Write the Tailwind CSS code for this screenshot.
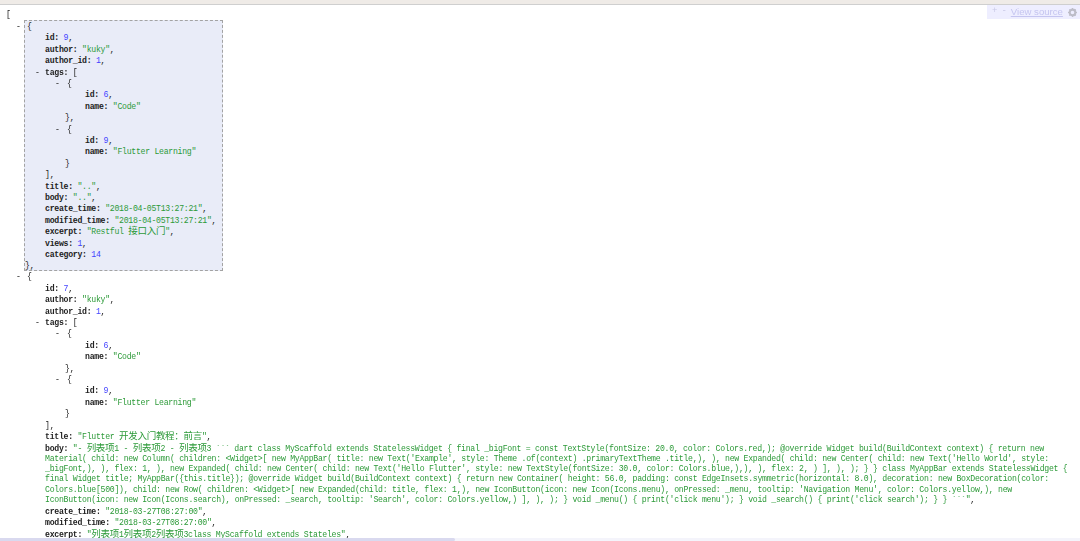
<!DOCTYPE html>
<html lang="zh">
<head>
    <meta charset="UTF-8">
    <title>JSON view</title>
    <script src="https://cdn.jsdelivr.net/npm/@tailwindcss/browser@4"></script>
</head>
<body class="bg-white">
<div class="relative h-[541px] w-[1080px] overflow-hidden font-['Liberation_Mono','Noto_Sans_CJK_SC',monospace] text-[8.2px] leading-[11.4px] tracking-[-0.287px] text-[#222] blur-[0.3px]">

    <!-- top strip -->
    <div class="h-[5px] border-b border-[#cfcfcf] bg-[#efebe7]"></div>

    <!-- view source bar -->
    <div class="absolute right-0 top-[5px] flex h-[14px] w-[93px] items-center gap-[4px] whitespace-nowrap bg-[#eeeeff] pl-[5px] text-[9px] tracking-normal text-[#c9c9e6]">
        <span>+</span><span>-</span>
        <a class="font-['Liberation_Sans',sans-serif] text-[9.6px] text-[#c5c5f0] underline">View source</a>
        <svg class="ml-[1px] shrink-0" width="9" height="9" viewBox="0 0 10 10"><circle cx="5" cy="5" r="3.2" fill="none" stroke="#bdbdc8" stroke-width="2.4"/><path d="M5 0v2M5 8v2M0 5h2M8 5h2M1.5 1.5l1.4 1.4M7.1 7.1l1.4 1.4M8.5 1.5L7.1 2.9M2.9 7.1L1.5 8.5" stroke="#bdbdc8" stroke-width="1.2"/></svg>
    </div>

    <!-- json -->
    <div class="pl-[6px] pt-[4px]">
        <div>[</div>

        <!-- selected item -->
        <div class="relative ml-[18px] h-[251px] w-[199px] border border-dashed border-[#a3a3a3] bg-[#e9ecf8] pl-[2px]">
            <span class="absolute left-[-9px] top-0">-</span>
            <div class="-mt-[0.5px]">{</div>
            <div class="pl-[18px]">
                <div class="font-bold">id: <span class="font-normal text-[#4343ff]">9</span><span class="font-normal">,</span></div>
                <div class="font-bold">author: <span class="font-normal text-[#2c9a38]">"kuky"</span><span class="font-normal">,</span></div>
                <div class="font-bold">author_id: <span class="font-normal text-[#4343ff]">1</span><span class="font-normal">,</span></div>
                <div class="relative font-bold"><span class="absolute left-[-10px] font-normal">-</span>tags: <span class="font-normal">[</span></div>
                <div class="relative pl-[22px]"><span class="absolute left-[10px]">-</span>{</div>
                <div class="pl-[40px] font-bold">id: <span class="font-normal text-[#4343ff]">6</span><span class="font-normal">,</span></div>
                <div class="pl-[40px] font-bold">name: <span class="font-normal text-[#2c9a38]">"Code"</span></div>
                <div class="pl-[20px]">},</div>
                <div class="relative pl-[22px]"><span class="absolute left-[10px]">-</span>{</div>
                <div class="pl-[40px] font-bold">id: <span class="font-normal text-[#4343ff]">9</span><span class="font-normal">,</span></div>
                <div class="pl-[40px] font-bold">name: <span class="font-normal text-[#2c9a38]">"Flutter Learning"</span></div>
                <div class="pl-[20px]">}</div>
                <div>],</div>
                <div class="font-bold">title: <span class="font-normal text-[#2c9a38]">".."</span><span class="font-normal">,</span></div>
                <div class="font-bold">body: <span class="font-normal text-[#2c9a38]">".."</span><span class="font-normal">,</span></div>
                <div class="font-bold">create_time: <span class="font-normal text-[#2c9a38]">"2018-04-05T13:27:21"</span><span class="font-normal">,</span></div>
                <div class="font-bold">modified_time: <span class="font-normal text-[#2c9a38]">"2018-04-05T13:27:21"</span><span class="font-normal">,</span></div>
                <div class="font-bold">excerpt: <span class="font-normal text-[#2c9a38]">"Restful <span class="text-[9.5px] leading-[9px]">接口入门</span>"</span><span class="font-normal">,</span></div>
                <div class="font-bold">views: <span class="font-normal text-[#4343ff]">1</span><span class="font-normal">,</span></div>
                <div class="font-bold">category: <span class="font-normal text-[#4343ff]">14</span></div>
            </div>
            <div class="ml-[-2px]">},</div>
        </div>

        <!-- second item -->
        <div class="relative ml-[21px]">
            <span class="absolute left-[-11px] top-0">-</span>
            <div>{</div>
            <div class="pl-[18px]">
                <div class="font-bold">id: <span class="font-normal text-[#4343ff]">7</span><span class="font-normal">,</span></div>
                <div class="font-bold">author: <span class="font-normal text-[#2c9a38]">"kuky"</span><span class="font-normal">,</span></div>
                <div class="font-bold">author_id: <span class="font-normal text-[#4343ff]">1</span><span class="font-normal">,</span></div>
                <div class="relative font-bold"><span class="absolute left-[-10px] font-normal">-</span>tags: <span class="font-normal">[</span></div>
                <div class="relative pl-[22px]"><span class="absolute left-[10px]">-</span>{</div>
                <div class="pl-[40px] font-bold">id: <span class="font-normal text-[#4343ff]">6</span><span class="font-normal">,</span></div>
                <div class="pl-[40px] font-bold">name: <span class="font-normal text-[#2c9a38]">"Code"</span></div>
                <div class="pl-[20px]">},</div>
                <div class="relative pl-[22px]"><span class="absolute left-[10px]">-</span>{</div>
                <div class="pl-[40px] font-bold">id: <span class="font-normal text-[#4343ff]">9</span><span class="font-normal">,</span></div>
                <div class="pl-[40px] font-bold">name: <span class="font-normal text-[#2c9a38]">"Flutter Learning"</span></div>
                <div class="pl-[20px]">}</div>
                <div>],</div>
                <div class="font-bold">title: <span class="font-normal text-[#2c9a38]">"Flutter <span class="text-[9.5px] leading-[9px]">开发入门教程：前言</span>"</span><span class="font-normal">,</span></div>
                <div class="mb-[0.5px] mt-[1px] whitespace-pre font-bold leading-[10.3px]">body: <span class="font-normal text-[#2c9a38]">"- <span class="text-[9.5px] leading-[9px]">列表项</span>1 - <span class="text-[9.5px] leading-[9px]">列表项</span>2 - <span class="text-[9.5px] leading-[9px]">列表项</span>3 ``` dart class MyScaffold extends StatelessWidget { final _bigFont = const TextStyle(fontSize: 20.0, color: Colors.red,); @override Widget build(BuildContext context) { return new
Material( child: new Column( children: &lt;Widget&gt;[ new MyAppBar( title: new Text('Example', style: Theme .of(context) .primaryTextTheme .title,), ), new Expanded( child: new Center( child: new Text('Hello World', style:
_bigFont,), ), flex: 1, ), new Expanded( child: new Center( child: new Text('Hello Flutter', style: new TextStyle(fontSize: 30.0, color: Colors.blue,),), ), flex: 2, ) ], ), ); } } class MyAppBar extends StatelessWidget {
final Widget title; MyAppBar({this.title}); @override Widget build(BuildContext context) { return new Container( height: 56.0, padding: const EdgeInsets.symmetric(horizontal: 8.0), decoration: new BoxDecoration(color:
Colors.blue[500]), child: new Row( children: &lt;Widget&gt;[ new Expanded(child: title, flex: 1,), new IconButton(icon: new Icon(Icons.menu), onPressed: _menu, tooltip: 'Navigation Menu', color: Colors.yellow,), new
IconButton(icon: new Icon(Icons.search), onPressed: _search, tooltip: 'Search', color: Colors.yellow,) ], ), ); } void _menu() { print('click menu'); } void _search() { print('click search'); } } ```"</span><span class="font-normal">,</span></div>
                <div class="font-bold">create_time: <span class="font-normal text-[#2c9a38]">"2018-03-27T08:27:00"</span><span class="font-normal">,</span></div>
                <div class="font-bold">modified_time: <span class="font-normal text-[#2c9a38]">"2018-03-27T08:27:00"</span><span class="font-normal">,</span></div>
                <div class="font-bold">excerpt: <span class="font-normal text-[#2c9a38]">"<span class="text-[9.5px] leading-[9px]">列表项</span>1<span class="text-[9.5px] leading-[9px]">列表项</span>2<span class="text-[9.5px] leading-[9px]">列表项</span>3class MyScaffold extends Stateles"</span><span class="font-normal">,</span></div>
            </div>
        </div>
    </div>

    <!-- horizontal scrollbar -->
    <div class="absolute bottom-0 left-0 h-[3px] w-full bg-[#f4f4fb]">
        <div class="h-full w-[455px] rounded-r-sm bg-[#d9d9ef]"></div>
    </div>
</div>
</body>
</html>
